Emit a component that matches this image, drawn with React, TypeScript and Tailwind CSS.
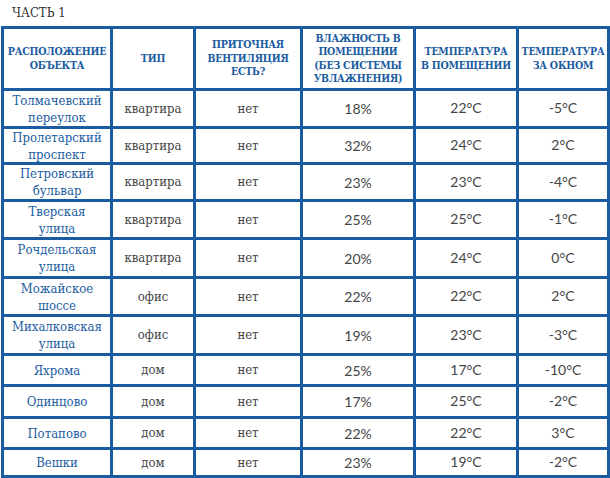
import React from "react";

type Row = { loc: string[]; type: string; vent: string; hum: string; tin: string; tout: string; h: string };

const rows: Row[] = [
  { loc: ["Толмачевский", "переулок"], type: "квартира", vent: "нет", hum: "18%", tin: "22°C", tout: "-5°C", h: "h-[35px]" },
  { loc: ["Пролетарский", "проспект"], type: "квартира", vent: "нет", hum: "32%", tin: "24°C", tout: "2°C", h: "h-[33px]" },
  { loc: ["Петровский", "бульвар"], type: "квартира", vent: "нет", hum: "23%", tin: "23°C", tout: "-4°C", h: "h-[34px]" },
  { loc: ["Тверская", "улица"], type: "квартира", vent: "нет", hum: "25%", tin: "25°C", tout: "-1°C", h: "h-[35px]" },
  { loc: ["Рочдельская", "улица"], type: "квартира", vent: "нет", hum: "20%", tin: "24°C", tout: "0°C", h: "h-[36px]" },
  { loc: ["Можайское", "шоссе"], type: "офис", vent: "нет", hum: "22%", tin: "22°C", tout: "2°C", h: "h-[35px]" },
  { loc: ["Михалковская", "улица"], type: "офис", vent: "нет", hum: "19%", tin: "23°C", tout: "-3°C", h: "h-[36px]" },
  { loc: ["Яхрома"], type: "дом", vent: "нет", hum: "25%", tin: "17°C", tout: "-10°C", h: "h-[28px]" },
  { loc: ["Одинцово"], type: "дом", vent: "нет", hum: "17%", tin: "25°C", tout: "-2°C", h: "h-[29px]" },
  { loc: ["Потапово"], type: "дом", vent: "нет", hum: "22%", tin: "22°C", tout: "3°C", h: "h-[28px]" },
  { loc: ["Вешки"], type: "дом", vent: "нет", hum: "23%", tin: "19°C", tout: "-2°C", h: "h-[25px]" },
];

const headers: string[][] = [
  ["РАСПОЛОЖЕНИЕ", "ОБЪЕКТА"],
  ["ТИП"],
  ["ПРИТОЧНАЯ", "ВЕНТИЛЯЦИЯ", "ЕСТЬ?"],
  ["ВЛАЖНОСТЬ В", "ПОМЕЩЕНИИ", "(БЕЗ СИСТЕМЫ", "УВЛАЖНЕНИЯ)"],
  ["ТЕМПЕРАТУРА", "В ПОМЕЩЕНИИ"],
  ["ТЕМПЕРАТУРА", "ЗА ОКНОМ"],
];

const serif = "font-['DejaVu_Serif_Condensed','DejaVu_Serif',serif]";
const sans = "font-['Lato','Open_Sans',sans-serif]";

export default function App() {
  return (
    <div className="w-[610px] h-[478px] bg-white overflow-hidden">
      <div className={`h-[26px] pl-[12px] pt-[4px] text-[13px] leading-[18px] text-[#333333] ${serif}`}>
        ЧАСТЬ 1
      </div>
      <div className="ml-[1px] w-[609px] bg-[#1b5ca1] p-[3px] grid grid-cols-[106px_80px_104px_110px_100px_88px] gap-[3px]">
        {headers.map((h, i) => (
          <div
            key={i}
            className={`h-[59px] bg-white flex flex-col items-center justify-center text-center whitespace-nowrap text-[10.5px] leading-[13.5px] tracking-[-0.2px] font-bold text-[#1b5ca1] ${serif}`}
          >
            {h.map((l) => (
              <span key={l}>{l}</span>
            ))}
          </div>
        ))}
        {rows.map((r) => (
          <React.Fragment key={r.loc.join(" ")}>
            <div
              className={`${r.h} bg-white flex flex-col items-center justify-center text-center whitespace-nowrap text-[13px] leading-[17px] text-[#1b5ca1] ${serif}`}
            >
              {r.loc.map((l) => (
                <span key={l}>{l}</span>
              ))}
            </div>
            <div className={`${r.h} bg-white flex items-center justify-center text-[13px] text-[#454545] ${serif}`}>
              {r.type}
            </div>
            <div className={`${r.h} bg-white flex items-center justify-center text-[13px] text-[#454545] ${serif}`}>
              {r.vent}
            </div>
            <div className={`${r.h} bg-white flex items-center justify-center text-[14px] text-[#454545] ${sans}`}>
              {r.hum}
            </div>
            <div className={`${r.h} bg-white flex items-center justify-center pb-[2px] text-[14px] text-[#454545] ${sans}`}>
              {r.tin}
            </div>
            <div className={`${r.h} bg-white flex items-center justify-center pb-[2px] text-[14px] text-[#454545] ${sans}`}>
              {r.tout}
            </div>
          </React.Fragment>
        ))}
      </div>
    </div>
  );
}
